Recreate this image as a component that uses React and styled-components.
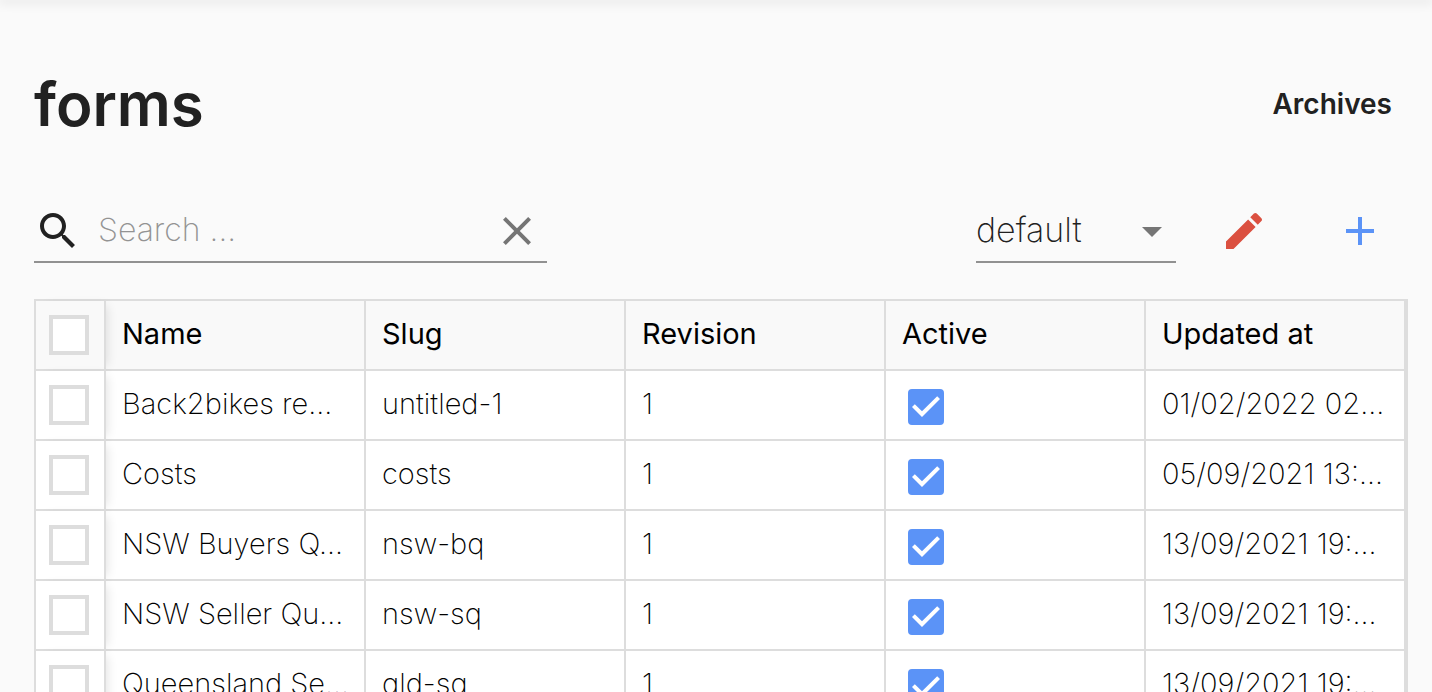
import React from "react";
import styled, { createGlobalStyle } from "styled-components";

const GlobalStyle = createGlobalStyle`
  *, *::before, *::after { box-sizing: border-box; }
  body {
    margin: 0;
    background: #fafafa;
    color: #212121;
    font-family: Inter, "Open Sans", "Liberation Sans", sans-serif;
    font-size: 28px;
    font-weight: 300;
  }
  button, input, select { font: inherit; color: inherit; }
`;

const Page = styled.div`
  height: 100vh;
  overflow: hidden;
`;

const TopBar = styled.header`
  height: 0;
  box-shadow: 0 0 12px 2px rgba(0, 0, 0, 0.14);
`;

const Main = styled.main`
  padding: 66px 24px 0 34px;
`;

const Heading = styled.div`
  display: flex;
  align-items: center;
  justify-content: space-between;
`;

const Title = styled.h1`
  margin: 0;
  font-size: 60px;
  line-height: 76px;
  font-weight: 600;
`;

const TextLink = styled.a`
  padding: 0 16px;
  color: inherit;
  font-weight: 600;
  line-height: 36px;
  text-decoration: none;
`;

const Toolbar = styled.div`
  display: flex;
  align-items: flex-start;
  gap: 20px;
  margin: 65px 0 36px;
`;

const Icon = styled.svg`
  display: block;
  flex: none;
  width: 48px;
  height: 48px;
  fill: currentColor;
`;

const SearchField = styled.label`
  display: flex;
  width: 513px;
  height: 56px;
  margin-right: auto;
  padding-right: 6px;
  border-bottom: 2px solid #919191;
`;

const SearchInput = styled.input`
  flex: 1;
  min-width: 0;
  height: 48px;
  padding: 0 16px 4px;
  border: 0;
  outline: 0;
  background: none;
  font-size: 32px;
  font-weight: 200;
  &::placeholder { color: #939393; opacity: 1; }
`;

const IconButton = styled.button`
  display: flex;
  justify-content: center;
  width: ${(p) => p.$width}px;
  height: 48px;
  padding: 0;
  border: 0;
  background: none;
  color: ${(p) => p.$color};
  cursor: pointer;
`;

const SelectField = styled.div`
  display: grid;
  width: 200px;
  height: 56px;
  border-bottom: 2px solid #919191;
  color: #757575;
  > * { grid-area: 1 / 1; }
  > svg { justify-self: end; pointer-events: none; }
`;

const Select = styled.select`
  width: 100%;
  height: 48px;
  padding: 0 48px 4px 0;
  border: 0;
  outline: 0;
  appearance: none;
  background: none;
  color: #212121;
  font-size: 34px;
  font-weight: 200;
`;

const Table = styled.table`
  width: 100%;
  table-layout: fixed;
  border: 2px solid #dddddd;
  border-bottom: 0;
  border-collapse: separate;
  border-spacing: 0;
  background: #ffffff;
  color: #000000;
  font-size: 29px;
`;

const Cell = styled.td`
  height: 70px;
  padding: 0 16px 2px;
  overflow: hidden;
  border-right: 2px solid #dddddd;
  border-bottom: 2px solid #dddddd;
  font-weight: 200;
  line-height: 36px;
  text-align: left;
  white-space: nowrap;
`;

const HeadCell = styled(Cell).attrs({ as: "th", scope: "col" })`
  background: #f9f9f9;
  font-weight: 400;
`;

const PinnedCell = styled(Cell)`
  position: relative;
  width: 70px;
  padding: 0 13px;
  background: ${(p) => (p.$head ? "#f9f9f9" : "#ffffff")};
  box-shadow: 6px 0 10px -5px rgba(0, 0, 0, 0.12);
`;

const RowCheckbox = styled.input.attrs({ type: "checkbox" })`
  display: block;
  width: 40px;
  height: 40px;
  margin: 0;
  appearance: none;
  border: 4px solid #dddddd;
  background: #ffffff;
  &:checked { background: #5b93f7; }
`;

const ActiveCell = styled(Cell)`
  padding-top: 6px;
`;

const Tick = styled.label`
  display: grid;
  place-items: center;
  width: 48px;
  height: 48px;
  > * { grid-area: 1 / 1; }
  > svg { color: #ffffff; pointer-events: none; }
`;

const TickInput = styled.input.attrs({ type: "checkbox" })`
  width: 36px;
  height: 36px;
  margin: 0;
  appearance: none;
  border: 2px solid #757575;
  border-radius: 4px;
  &:checked {
    border-color: #5b93f7;
    background: #5b93f7;
  }
`;

const paths = {
  search:
    "M15.5 14h-.79l-.28-.27C15.41 12.59 16 11.11 16 9.5 16 5.91 13.09 3 9.5 3S3 5.91 3 9.5 5.91 16 9.5 16c1.61 0 3.09-.59 4.23-1.57l.27.28v.79l5 4.99L20.49 19l-4.99-5zm-6 0C7.01 14 5 11.99 5 9.5S7.01 5 9.5 5 14 7.01 14 9.5 11.99 14 9.5 14z",
  close:
    "M19 6.41L17.59 5 12 10.59 6.41 5 5 6.41 10.59 12 5 17.59 6.41 19 12 13.41 17.59 19 19 17.59 13.41 12z",
  dropDown: "M7 10l5 5 5-5z",
  edit: "M3 17.25V21h3.75L17.81 9.94l-3.75-3.75L3 17.25zM20.71 7.04c.39-.39.39-1.02 0-1.41l-2.34-2.34c-.39-.39-1.02-.39-1.41 0l-1.83 1.83 3.75 3.75 1.83-1.83z",
  add: "M19 13h-6v6h-2v-6H5v-2h6V5h2v6h6v2z",
  check: "M10 17l-5-5 1.41-1.41L10 14.17l7.59-7.59L19 8l-9 9z",
};

const Glyph = ({ name }) => (
  <Icon viewBox="0 0 24 24" aria-hidden="true">
    <path d={paths[name]} />
  </Icon>
);

const columns = ["Name", "Slug", "Revision", "Active", "Updated at"];

const rows = [
  { name: "Back2bikes re...", slug: "untitled-1", updated: "01/02/2022 02..." },
  { name: "Costs", slug: "costs", updated: "05/09/2021 13:..." },
  { name: "NSW Buyers Q...", slug: "nsw-bq", updated: "13/09/2021 19:..." },
  { name: "NSW Seller Qu...", slug: "nsw-sq", updated: "13/09/2021 19:..." },
  { name: "Queensland Se...", slug: "qld-sq", updated: "13/09/2021 19:..." },
];

export default function App() {
  return (
    <Page>
      <GlobalStyle />
      <TopBar />
      <Main>
        <Heading>
          <Title>forms</Title>
          <TextLink href="#archives">Archives</TextLink>
        </Heading>

        <Toolbar>
          <SearchField>
            <Glyph name="search" />
            <SearchInput type="text" placeholder="Search ..." aria-label="Search" />
            <IconButton type="button" $width={48} $color="#757575" aria-label="Clear search">
              <Glyph name="close" />
            </IconButton>
          </SearchField>
          <SelectField>
            <Select aria-label="View" defaultValue="default">
              <option value="default">default</option>
            </Select>
            <Glyph name="dropDown" />
          </SelectField>
          <IconButton type="button" $width={96} $color="#db5040" aria-label="Edit view">
            <Glyph name="edit" />
          </IconButton>
          <IconButton type="button" $width={96} $color="#5b93f7" aria-label="Add form">
            <Glyph name="add" />
          </IconButton>
        </Toolbar>

        <Table>
          <thead>
            <tr>
              <PinnedCell as="th" $head>
                <RowCheckbox aria-label="Select all" />
              </PinnedCell>
              {columns.map((c) => (
                <HeadCell key={c}>{c}</HeadCell>
              ))}
            </tr>
          </thead>
          <tbody>
            {rows.map((r) => (
              <tr key={r.slug}>
                <PinnedCell>
                  <RowCheckbox aria-label={`Select ${r.slug}`} />
                </PinnedCell>
                <Cell>{r.name}</Cell>
                <Cell>{r.slug}</Cell>
                <Cell>1</Cell>
                <ActiveCell>
                  <Tick>
                    <TickInput defaultChecked aria-label={`${r.slug} active`} />
                    <Glyph name="check" />
                  </Tick>
                </ActiveCell>
                <Cell>{r.updated}</Cell>
              </tr>
            ))}
          </tbody>
        </Table>
      </Main>
    </Page>
  );
}
